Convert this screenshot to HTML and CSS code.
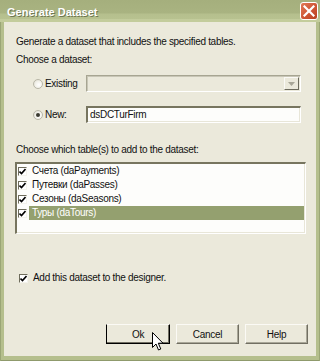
FILE: index.html
```html
<!DOCTYPE html>
<html>
<head>
<meta charset="utf-8">
<link rel="stylesheet" href="styles.css">
</head>
<body>
<div class="window">
  <div class="titlebar">
    <span class="title">Generate Dataset</span>
    <span class="close">
      <svg width="12" height="12" viewBox="0 0 12 12"><path d="M1.5 1.5 L10.5 10.5 M10.5 1.5 L1.5 10.5" stroke="#fff" stroke-width="2.2" stroke-linecap="square"/></svg>
    </span>
  </div>
  <div class="frame">
    <div class="body">
      <p class="line l1">Generate a dataset that includes the specified tables.</p>
      <p class="line l2">Choose a dataset:</p>
      <div class="opt opt-existing">
        <span class="radio"></span>
        <span class="opt-label">Existing</span>
        <div class="combo">
          <span class="drop"><svg width="7" height="4" viewBox="0 0 7 4"><path d="M0 0 H7 L3.5 4 Z" fill="#a8a697"/></svg></span>
        </div>
      </div>
      <div class="opt opt-new">
        <span class="radio checked"><span class="dot"></span></span>
        <span class="opt-label">New:</span>
        <div class="field">dsDCTurFirm</div>
      </div>
      <p class="line l3">Choose which table(s) to add to the dataset:</p>
      <ul class="list">
        <li class="item"><span class="check"><svg width="7" height="7" viewBox="0 0 7 7"><path d="M0.5 3.5 L2.5 5.5 L6.5 1" fill="none" stroke="#000" stroke-width="1.6"/></svg></span><span class="item-text">Счета (daPayments)</span></li>
        <li class="item"><span class="check"><svg width="7" height="7" viewBox="0 0 7 7"><path d="M0.5 3.5 L2.5 5.5 L6.5 1" fill="none" stroke="#000" stroke-width="1.6"/></svg></span><span class="item-text">Путевки (daPasses)</span></li>
        <li class="item"><span class="check"><svg width="7" height="7" viewBox="0 0 7 7"><path d="M0.5 3.5 L2.5 5.5 L6.5 1" fill="none" stroke="#000" stroke-width="1.6"/></svg></span><span class="item-text">Сезоны (daSeasons)</span></li>
        <li class="item selected"><span class="check"><svg width="7" height="7" viewBox="0 0 7 7"><path d="M0.5 3.5 L2.5 5.5 L6.5 1" fill="none" stroke="#000" stroke-width="1.6"/></svg></span><span class="item-text">Туры (daTours)</span></li>
      </ul>
      <div class="addrow">
        <span class="check"><svg width="7" height="7" viewBox="0 0 7 7"><path d="M0.5 3.5 L2.5 5.5 L6.5 1" fill="none" stroke="#000" stroke-width="1.6"/></svg></span>
        <span class="add-text">Add this dataset to the designer.</span>
      </div>
      <div class="buttons">
        <button class="btn default">Ok</button>
        <button class="btn">Cancel</button>
        <button class="btn">Help</button>
      </div>
    </div>
  </div>
  <svg class="cursor" width="12" height="19" viewBox="0 0 12 19"><path d="M0.5 0.5 V15.5 L4 12 L6.5 18 L8.8 17 L6.3 11.2 H11 Z" fill="#fff" stroke="#000" stroke-width="1"/></svg>
</div>
</body>
</html>
```

FILE: styles.css
```css
html, body {
  margin: 0;
  padding: 0;
}
body {
  width: 320px;
  height: 361px;
  overflow: hidden;
  font-family: "Liberation Sans", Arial, sans-serif;
  font-size: 10px;
  letter-spacing: -0.3px;
  color: #111;
}
.window {
  position: relative;
  width: 320px;
  height: 361px;
  display: flex;
  flex-direction: column;
}
.titlebar {
  height: 22px;
  flex: 0 0 22px;
  box-sizing: border-box;
  display: flex;
  align-items: flex-start;
  justify-content: space-between;
  padding: 0 2px 0 7px;
  background: linear-gradient(to bottom, #a5af7d 0, #a9b381 13px, #b5bf8d 14px, #b8c290 19px, #c3cc9c 19px, #c3cc9c 22px);
}
.title {
  margin-top: 5px;
  font-weight: bold;
  font-size: 11px;
  letter-spacing: 0;
  line-height: 14px;
  color: #fff;
  text-shadow: 1px 1px 0 #6f7852;
}
.close {
  margin-top: 2px;
  width: 18px;
  height: 18px;
  box-sizing: border-box;
  border: 1px solid #fff;
  border-radius: 3px;
  background: linear-gradient(135deg, #e07a58 0, #cf5535 55%, #b8421f 100%);
  display: flex;
  align-items: center;
  justify-content: center;
}
.close svg { display: block; }
.frame {
  flex: 1;
  display: flex;
  padding: 0 4px 5px 4px;
  background: #b5bf8d;
  box-shadow: inset 1px 0 0 #9ba676, inset -1px 0 0 #9ba676, inset 0 -1px 0 #8f9a6c;
}
.body {
  flex: 1;
  display: flex;
  flex-direction: column;
  background: #ebe9db;
}
.line {
  margin: 0;
  padding-left: 12px;
  line-height: 14px;
  height: 14px;
  white-space: nowrap;
}
.l1 { margin-top: 13px; }
.l2 { margin-top: 4px; }
.l3 { margin-top: 20px; }
.opt {
  display: flex;
  align-items: center;
  height: 17px;
  padding-left: 29px;
}
.opt-existing { margin-top: 8px; }
.opt-new { margin-top: 14px; }
.radio {
  width: 10px;
  height: 10px;
  box-sizing: border-box;
  border-radius: 50%;
  border: 1px solid #b9b7a8;
  background: radial-gradient(circle at 60% 60%, #ffffff 0, #f2f1ea 50%, #d9d7cb 100%);
  display: flex;
  align-items: center;
  justify-content: center;
  margin-top: 1px;
}
.radio .dot {
  width: 4px;
  height: 4px;
  border-radius: 50%;
  background: #3a3a30;
}
.opt-label {
  width: 41px;
  margin-left: 2px;
  line-height: 14px;
}
.combo {
  width: 215px;
  height: 17px;
  box-sizing: border-box;
  border-top: 1px solid #a7a592;
  border-left: 1px solid #a7a592;
  border-right: 1px solid #fff;
  border-bottom: 1px solid #fff;
  box-shadow: inset 1px 1px 0 #c8c6b6;
  display: flex;
  justify-content: flex-end;
  align-items: stretch;
  padding: 1px 1px 1px 0;
}
.drop {
  width: 15px;
  box-sizing: border-box;
  border-top: 1px solid #fbfaf6;
  border-left: 1px solid #fbfaf6;
  border-right: 1px solid #6d6b5d;
  border-bottom: 1px solid #6d6b5d;
  display: flex;
  align-items: center;
  justify-content: center;
}
.drop svg { display: block; }
.field {
  width: 215px;
  height: 17px;
  box-sizing: border-box;
  border-top: 2px solid #77755f;
  border-left: 2px solid #77755f;
  border-right: 1px solid #fff;
  border-bottom: 1px solid #fff;
  background: #fdfdfb;
  box-shadow: inset 0 -1px 0 #e8e6d8, inset -1px 0 0 #e8e6d8;
  padding-left: 2px;
  line-height: 14px;
  white-space: nowrap;
}
.list {
  list-style: none;
  margin: 5px 0 0 11px;
  padding: 0;
  width: 291px;
  height: 72px;
  box-sizing: border-box;
  border-top: 2px solid #77755f;
  border-left: 2px solid #77755f;
  border-right: 1px solid #fff;
  border-bottom: 1px solid #fff;
  background: #fdfdfb;
  box-shadow: inset -1px 0 0 #e8e6d8, inset 0 -1px 0 #e8e6d8;
}
.item {
  display: flex;
  align-items: center;
  height: 14px;
}
.check {
  width: 9px;
  height: 9px;
  box-sizing: border-box;
  border-top: 1px solid #6e6c5b;
  border-left: 1px solid #6e6c5b;
  border-right: 1px solid #f4f3ec;
  border-bottom: 1px solid #f4f3ec;
  background: #fff;
  display: flex;
  align-items: center;
  justify-content: center;
  flex: 0 0 9px;
}
.check svg { display: block; }
.item .check { margin-left: 1px; }
.item-text {
  flex: 1;
  margin-left: 2px;
  padding-left: 3px;
  line-height: 14px;
  height: 14px;
  white-space: nowrap;
}
.item.selected .item-text {
  background: #94a06f;
  color: #fff;
  margin-right: 1px;
}
.addrow {
  display: flex;
  align-items: center;
  height: 14px;
  margin-top: 37px;
  padding-left: 15px;
}
.add-text {
  margin-left: 5px;
  line-height: 14px;
}
.buttons {
  display: flex;
  justify-content: flex-end;
  gap: 6px;
  margin-top: 39px;
  padding-right: 8px;
}
.btn {
  width: 63px;
  height: 20px;
  margin: 0;
  padding: 0;
  box-sizing: border-box;
  font-family: "Liberation Sans", Arial, sans-serif;
  font-size: 10px;
  letter-spacing: -0.3px;
  color: #111;
  background: #ebe9db;
  border-top: 1px solid #fbfaf5;
  border-left: 1px solid #fbfaf5;
  border-right: 1px solid #716f62;
  border-bottom: 1px solid #716f62;
  box-shadow: inset -1px -1px 0 #a9a798;
}
.btn.default {
  width: 64px;
  border-top: 1px solid #fbfaf5;
  border-left: 1px solid #000;
  border-bottom: 1px solid #000;
  border-right: 1px solid #000;
  box-shadow: inset -1px -1px 0 #716f62;
}
.cursor {
  position: absolute;
  left: 152px;
  top: 332px;
}
```
